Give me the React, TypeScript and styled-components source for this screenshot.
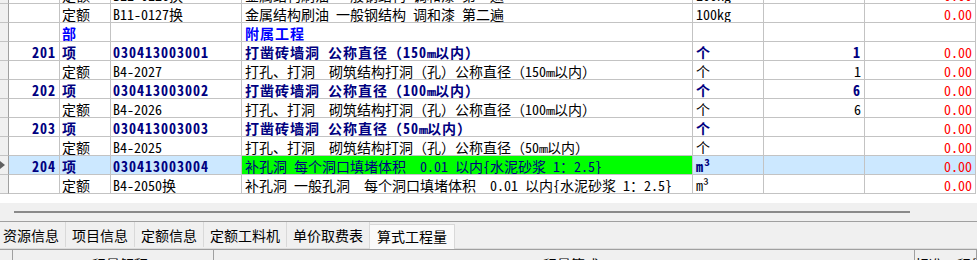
import React from 'react';
import styled, { createGlobalStyle, css } from 'styled-components';

const GlobalStyle = createGlobalStyle`
  html, body { margin: 0; padding: 0; background: #f0f0f0; }
  #root { width: 977px; height: 260px; overflow: hidden; }
`;

type Kind = 'quota' | 'section' | 'item';

interface RowData {
  no?: string;
  type: string;
  code: string;
  desc: React.ReactNode;
  unit: React.ReactNode;
  qty?: string;
  price?: string;
  kind: Kind;
  selected?: boolean;
}

const GRID_FONT = `"Noto Sans Mono CJK SC", "Noto Sans CJK SC", "Liberation Mono", monospace`;
const UI_FONT = `"Noto Sans CJK SC", "Noto Sans", sans-serif`;

const Page = styled.div`
  width: 977px;
  height: 260px;
  display: flex;
  flex-direction: column;
  overflow: hidden;
  background: #f0f0f0;
`;

const GridArea = styled.div`
  height: 203px;
  flex: none;
  background: #ffffff;
  overflow: hidden;
`;

const GridBody = styled.div`
  margin-top: -15px;
  font-family: ${GRID_FONT};
  font-size: 14px;
`;

const kindStyles = {
  quota: css`color: #000000; font-weight: 400;`,
  section: css`color: #0000ff; font-weight: 700; letter-spacing: 1px;`,
  item: css`color: #000080; font-weight: 700; letter-spacing: 1px;`,
};

const Row = styled.div<{ $kind: Kind; $selected?: boolean }>`
  display: grid;
  grid-template-columns: 9px 51px 51px 131px 451px 71px 101px 111px 1fr;
  height: 19px;
  ${(p) => kindStyles[p.$kind]}
  background: ${(p) => (p.$selected ? '#cce8ff' : '#ffffff')};
`;

const Cell = styled.div<{ $align?: 'left' | 'right'; $dark?: boolean; $fill?: string; $plain?: boolean }>`
  box-sizing: border-box;
  height: 19px;
  border-right: 1px solid ${(p) => (p.$dark ? '#7f7f7f' : '#c3c3c3')};
  border-bottom: 1px solid #c3c3c3;
  padding: 1px 3px 0 3px;
  line-height: 18px;
  white-space: pre;
  overflow: hidden;
  text-align: ${(p) => p.$align ?? 'left'};
  background: ${(p) => p.$fill ?? 'transparent'};
  ${(p) => p.$plain && css`font-weight: 400; letter-spacing: 0; color: #000080;`}
`;

const TypeCell = styled(Cell)`
  padding-left: 2px;
`;

const CodeCell = styled(Cell)`
  padding-left: 2px;
`;

const Header = styled.div`
  box-sizing: border-box;
  height: 19px;
  background: #f0f0f0;
  border-right: 1px solid #a0a0a0;
  border-bottom: 1px solid #c3c3c3;
  display: flex;
  align-items: center;
  overflow: hidden;
`;

const Marker = styled.span`
  width: 0;
  height: 0;
  border-top: 4px solid transparent;
  border-bottom: 4px solid transparent;
  border-left: 5px solid #606060;
`;

const Price = styled.span`
  color: #ff0000;
  font-weight: 400;
  letter-spacing: 0;
`;

const Mm = styled.span`
  font-size: 10px;
  letter-spacing: -1px;
`;

const Tail = styled.div`
  background: #ffffff;
`;

const ScrollStrip = styled.div`
  height: 18px;
  flex: none;
  box-sizing: border-box;
  padding: 8px 0 0 14px;
  background: #f0f0f0;
`;

const ScrollThumb = styled.div`
  width: 896px;
  height: 2px;
  background: #8a8a8a;
`;

const TabBar = styled.div`
  flex: none;
  height: 29px;
  box-sizing: border-box;
  border-top: 1px solid #a0a0a0;
  border-bottom: 1px solid #a0a0a0;
  display: flex;
  align-items: flex-start;
  padding-left: 0;
  font-family: ${UI_FONT};
  font-size: 14px;
  color: #000000;
  background: #f0f0f0;
  box-shadow: inset 0 -3px 0 -2px #dcdcdc;
`;

const Tab = styled.div<{ $active?: boolean; $first?: boolean }>`
  box-sizing: border-box;
  height: 25px;
  line-height: 24px;
  padding: 1px 6px 0 6px;
  margin-left: ${(p) => (p.$first ? '-3px' : '0')};
  border-right: 1px solid #d9d9d9;
  white-space: nowrap;
  ${(p) =>
    p.$active &&
    css`
      margin-top: 2px;
      height: 25px;
      line-height: 22px;
      padding: 0 7px;
      background: #fafafa;
      border: 1px solid #d9d9d9;
      border-bottom: none;
      margin-left: -1px;
    `}
`;

const BottomHeader = styled.div`
  flex: none;
  height: 26px;
  display: grid;
  grid-template-columns: 13px 201px 701px 1fr;
  font-family: ${UI_FONT};
  font-size: 14px;
  color: #000000;
  background: #f0f0f0;
`;

const HeadCell = styled.div`
  box-sizing: border-box;
  border-right: 1px solid #a0a0a0;
  line-height: 24px;
  padding-top: 2px;
  text-align: center;
  white-space: nowrap;
  overflow: hidden;
`;

const d150 = (
  <>
    （150<Mm>mm</Mm>以内）
  </>
);
const d100 = (
  <>
    （100<Mm>mm</Mm>以内）
  </>
);
const d50 = (
  <>
    （50<Mm>mm</Mm>以内）
  </>
);

const rows: RowData[] = [
  { type: '定额', code: 'B11-0126换', desc: '金属结构刷油 一般钢结构 调和漆 第一遍', unit: '100kg', price: '0.00', kind: 'quota' },
  { type: '定额', code: 'B11-0127换', desc: '金属结构刷油 一般钢结构 调和漆 第二遍', unit: '100kg', price: '0.00', kind: 'quota' },
  { type: '部', code: '', desc: '附属工程', unit: '', kind: 'section' },
  { no: '201', type: '项', code: '030413003001', desc: <>打凿砖墙洞 公称直径{d150}</>, unit: '个', qty: '1', price: '0.00', kind: 'item' },
  { type: '定额', code: 'B4-2027', desc: <>打孔、打洞  砌筑结构打洞（孔）公称直径{d150}</>, unit: '个', qty: '1', price: '0.00', kind: 'quota' },
  { no: '202', type: '项', code: '030413003002', desc: <>打凿砖墙洞 公称直径{d100}</>, unit: '个', qty: '6', price: '0.00', kind: 'item' },
  { type: '定额', code: 'B4-2026', desc: <>打孔、打洞  砌筑结构打洞（孔）公称直径{d100}</>, unit: '个', qty: '6', price: '0.00', kind: 'quota' },
  { no: '203', type: '项', code: '030413003003', desc: <>打凿砖墙洞 公称直径{d50}</>, unit: '个', price: '0.00', kind: 'item' },
  { type: '定额', code: 'B4-2025', desc: <>打孔、打洞  砌筑结构打洞（孔）公称直径{d50}</>, unit: '个', price: '0.00', kind: 'quota' },
  { no: '204', type: '项', code: '030413003004', desc: '补孔洞 每个洞口填堵体积  0.01 以内{水泥砂浆 1：2.5}', unit: 'm³', price: '0.00', kind: 'item', selected: true },
  { type: '定额', code: 'B4-2050换', desc: '补孔洞 一般孔洞  每个洞口填堵体积  0.01 以内{水泥砂浆 1：2.5}', unit: 'm³', price: '0.00', kind: 'quota' },
];

const tabs = ['资源信息', '项目信息', '定额信息', '定额工料机', '单价取费表', '算式工程量'];

export default function App() {
  return (
    <>
      <GlobalStyle />
      <Page>
        <GridArea>
          <GridBody>
            {rows.map((r, i) => (
              <Row key={i} $kind={r.kind} $selected={r.selected}>
                <Header>{r.selected && <Marker />}</Header>
                <Cell $align="right">{r.no ?? ''}</Cell>
                <TypeCell>{r.type}</TypeCell>
                <CodeCell>{r.code}</CodeCell>
                <Cell $fill={r.selected ? '#00ff00' : undefined} $plain={r.selected}>
                  {r.desc}
                </Cell>
                <Cell>{r.unit}</Cell>
                <Cell $align="right" $dark={false}>{r.qty ?? ''}</Cell>
                <Cell $align="right">{r.price ? <Price>{r.price}</Price> : ''}</Cell>
                <Tail />
              </Row>
            ))}
          </GridBody>
        </GridArea>
        <ScrollStrip>
          <ScrollThumb />
        </ScrollStrip>
        <TabBar>
          {tabs.map((t, i) => (
            <Tab key={t} $first={i === 0} $active={i === tabs.length - 1}>
              {t}
            </Tab>
          ))}
        </TabBar>
        <BottomHeader>
          <HeadCell />
          <HeadCell>工程量解释</HeadCell>
          <HeadCell>工程量算式</HeadCell>
          <HeadCell>标准工程量</HeadCell>
        </BottomHeader>
      </Page>
    </>
  );
}
